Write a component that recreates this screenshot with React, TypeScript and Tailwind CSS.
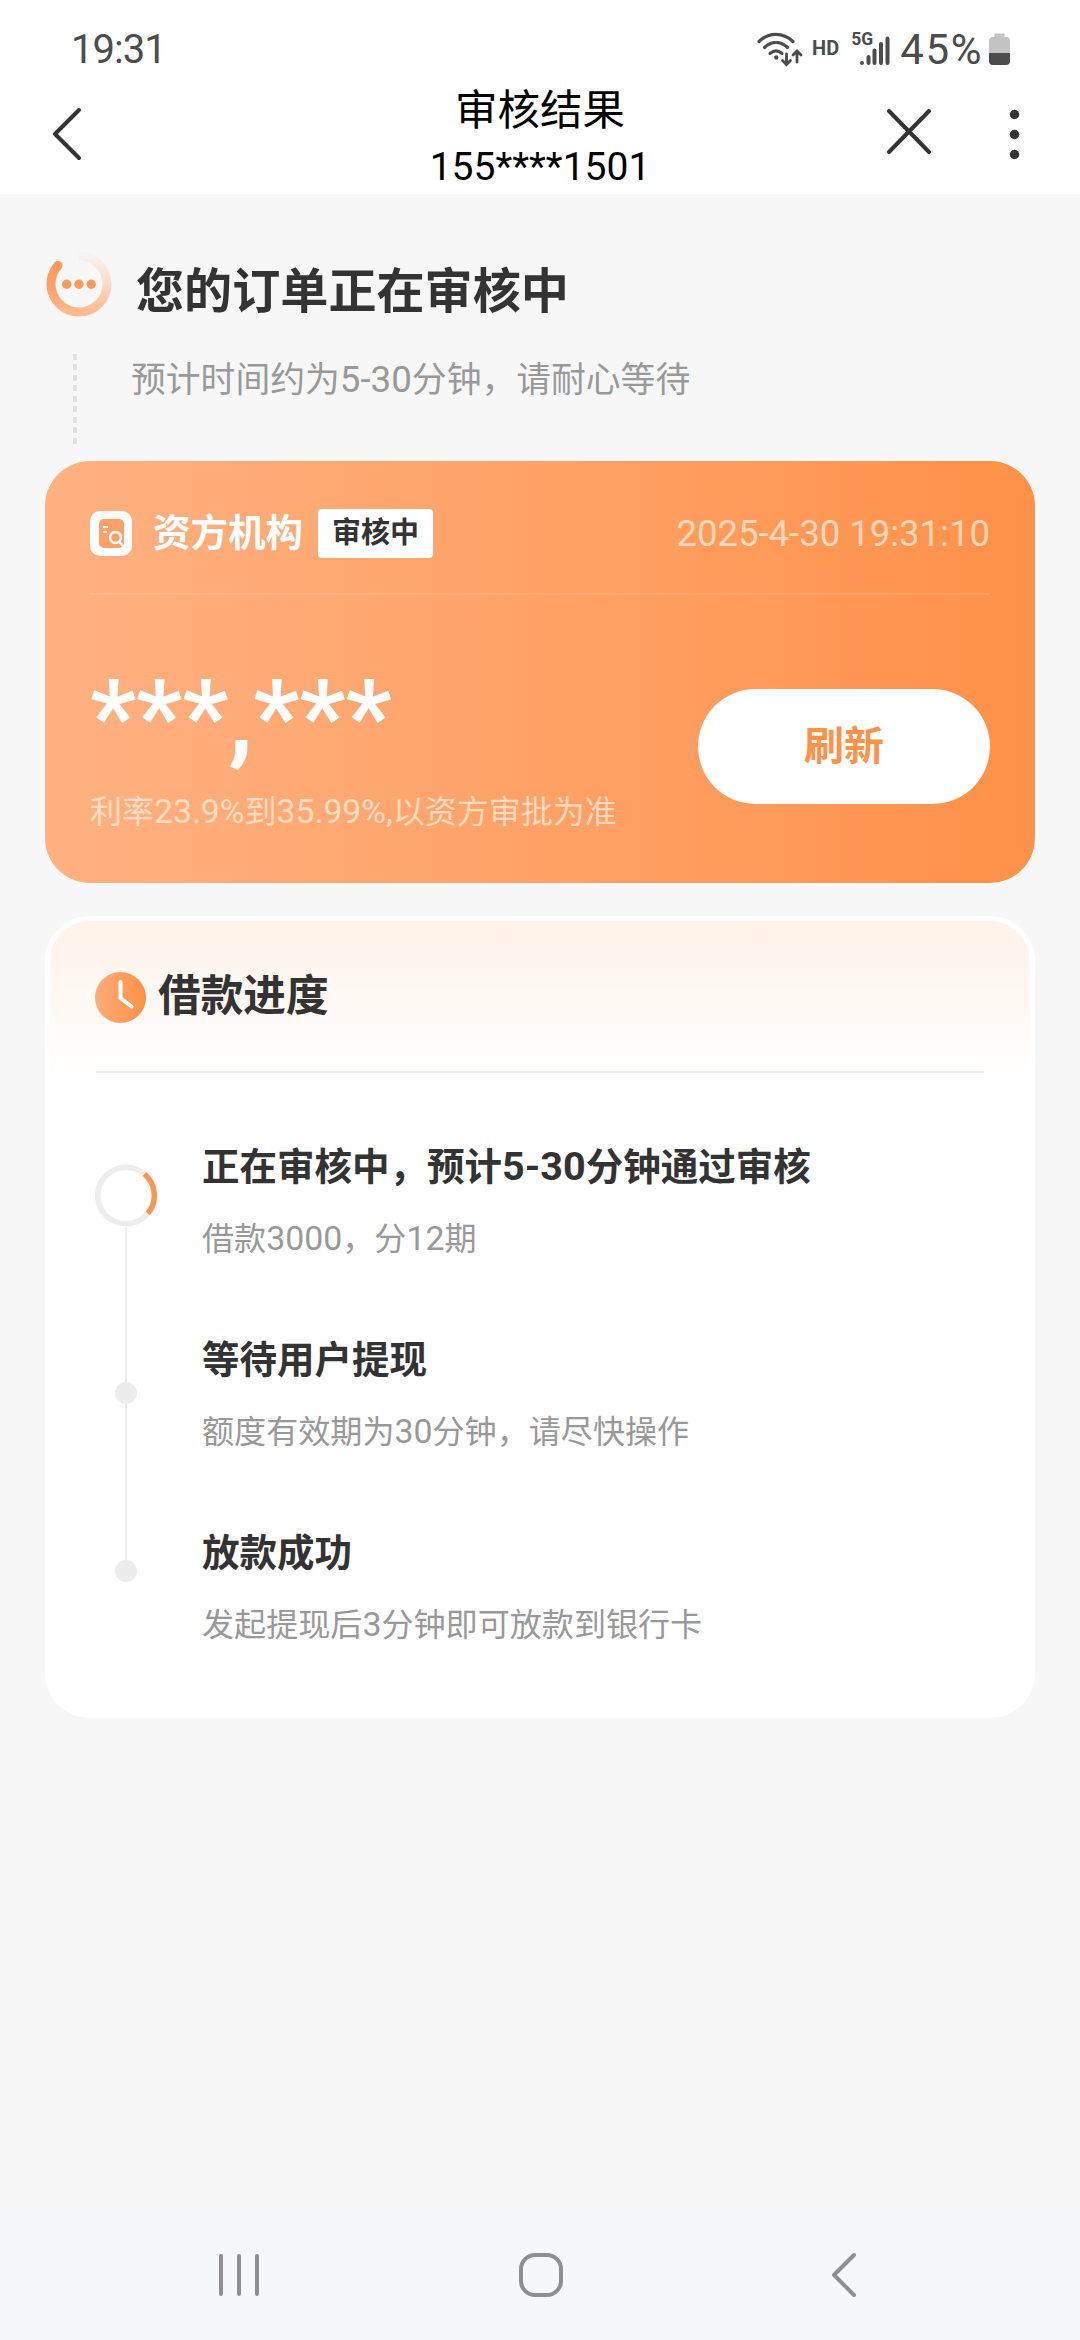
// ReviewResult - 审核结果
// Order under review: status header, lender card, loan progress

interface ProgressStep {
    id: number;
    title: string;
    desc: string;
}

const steps: ProgressStep[] = [
    { id: 1, title: '正在审核中，预计5-30分钟通过审核', desc: '借款3000，分12期' },
    { id: 2, title: '等待用户提现', desc: '额度有效期为30分钟，请尽快操作' },
    { id: 3, title: '放款成功', desc: '发起提现后3分钟即可放款到银行卡' },
];

// Latin runs are set slightly larger than the Chinese text around them
const MixedText = ({ text }: { text: string }) => (
    <>
        {text.split(/([\x21-\x7e]+)/).map((part, i) =>
            i % 2 === 1 ? (
                <span key={i} className="text-[1.055em] leading-none">{part}</span>
            ) : (
                part
            )
        )}
    </>
);

const StatusBar = () => (
    <div className="flex h-[82px] shrink-0 items-start pl-[71px] pr-[70px] pt-[26px] text-[#4c4c4c]">
        <span className="text-[40px] leading-[47px] tracking-[-1px]">19:31</span>
        <div className="ml-auto flex">
            {/* Wifi */}
            <svg className="mt-[3px] h-10 w-[48px]" viewBox="0 0 48 40" fill="none" stroke="#4c4c4c" strokeWidth="3.2" strokeLinecap="round">
                <path d="M3 12.500C13 3 27 3 37 12.500" />
                <path d="M8.500 18.500C15.500 11.800 24.500 11.800 31.500 18.500" />
                <path d="M14 24.500C18 21 22 21 26 24.500" />
                <circle cx="20.300" cy="28.500" r="2.200" fill="#4c4c4c" stroke="none" />
                <path d="M30.500 25V35M26.500 31.500L30.500 35.500L34.500 31.500M41 33V22.500M37 26L41 22L45 26" strokeWidth="2.800" />
            </svg>
            <span className="ml-[8px] mt-[11px] text-[20px] font-bold leading-[23px]">HD</span>
            {/* Signal */}
            <div className="relative ml-[12px] h-[47px] w-[40px]">
                <span className="absolute left-0 top-[3px] text-[17.500px] font-bold leading-[20px]">5G</span>
                <svg className="absolute left-0 top-[10px] h-[30px] w-[40px]" viewBox="0 0 40 30" fill="#4c4c4c">
                    <rect x="9" y="25" width="4" height="4" rx="2" />
                    <rect x="15.500" y="19" width="4" height="10" rx="2" />
                    <rect x="21.500" y="12.500" width="4" height="16.500" rx="2" />
                    <rect x="28" y="6" width="4" height="23" rx="2" />
                    <rect x="34.500" y="0.500" width="4" height="28.500" rx="2" />
                </svg>
            </div>
            <span className="ml-[9px] text-[42px] leading-[47px] tracking-[1.6px]">45%</span>
            {/* Battery */}
            <svg className="ml-[6px] mt-[7px] h-[33px] w-[21px]" viewBox="0 0 21 33">
                <path d="M5.500 0.500H15.500V4H17Q21 4 21 8V20H0V8Q0 4 4 4H5.500Z" fill="#c3c3c3" />
                <path d="M0 20H21V28Q21 32 17 32H4Q0 32 0 28Z" fill="#4c4c4c" />
            </svg>
        </div>
    </div>
);

const TitleBar = () => (
    <div className="relative h-[112px] shrink-0 text-center text-black">
        <div className="pt-[2px] text-[42.500px] leading-[54px]">审核结果</div>
        <div className="text-[39px] leading-[58px]">155****1501</div>
        <svg className="absolute left-[49px] top-[24px] h-[56px] w-[34px]" viewBox="0 0 34 56" fill="none" stroke="#333" strokeWidth="4" strokeLinecap="round" strokeLinejoin="round">
            <path d="M30 4L6 28L30 52" />
        </svg>
        <svg className="absolute left-[884px] top-[24px] h-[50px] w-[50px]" viewBox="0 0 50 50" fill="none" stroke="#333" strokeWidth="4" strokeLinecap="round">
            <path d="M5 5L45 46M45 5L5 46" />
        </svg>
        <svg className="absolute left-[1009px] top-[26px] h-[52px] w-[12px]" viewBox="0 0 12 52" fill="#333">
            <circle cx="5.500" cy="6.500" r="4.700" />
            <circle cx="5.500" cy="26.500" r="4.700" />
            <circle cx="5.500" cy="46.500" r="4.700" />
        </svg>
    </div>
);

const LoadingIcon = () => (
    <svg className="h-[70px] w-[70px]" viewBox="0 0 70 70" fill="none">
        <defs>
            <linearGradient id="ringLeft" x1="0" y1="0" x2="0" y2="1">
                <stop offset="0" stopColor="#fc9a5b" />
                <stop offset="0.500" stopColor="#fda269" />
                <stop offset="1" stopColor="#fdbb90" />
            </linearGradient>
            <linearGradient id="ringRight" x1="0" y1="1" x2="0" y2="0">
                <stop offset="0" stopColor="#fdbb90" />
                <stop offset="0.500" stopColor="#fbd9c4" />
                <stop offset="1" stopColor="#f8f3f0" />
            </linearGradient>
        </defs>
        <path d="M35 8A28 28 0 0 1 35 64" stroke="url(#ringRight)" strokeWidth="9" />
        <path d="M14 17.500A28 28 0 0 0 35.200 64" stroke="url(#ringLeft)" strokeWidth="9" />
        <circle cx="14" cy="17.500" r="4.500" fill="#fc9a5b" />
        <circle cx="22.700" cy="36.300" r="4.700" fill="#fc9a5b" />
        <circle cx="35" cy="36.300" r="4.700" fill="#fc9a5b" />
        <circle cx="47.300" cy="36.300" r="4.700" fill="#fc9a5b" />
    </svg>
);

const LenderCard = () => (
    <section className="mx-[45px] h-[422px] shrink-0 rounded-[45px] bg-linear-to-r from-[#ffb181] to-[#ff9148] px-[45px]">
        <div className="flex h-[134px] items-center border-b-2 border-white/10 pt-[13px]">
            <svg className="h-[45px] w-[42px]" viewBox="0 0 42 45" fill="none">
                <rect width="42" height="45" rx="10" fill="#fff" />
                <rect x="9" y="8" width="25" height="29" rx="5" fill="#ffa066" />
                <path d="M13 16H18M13 21H17" stroke="#fff" strokeWidth="2" />
                <circle cx="25.500" cy="26.500" r="5.500" stroke="#fff" strokeWidth="2.400" />
                <path d="M29.500 31L33 35" stroke="#fff" strokeWidth="2.400" />
            </svg>
            <h2 className="ml-[21px] text-[37.500px] font-bold text-white">资方机构</h2>
            <span className="ml-[15px] flex h-[49px] w-[115px] items-center justify-center rounded-[4px] bg-white pt-[1px] text-[29px] font-bold text-[#333]">
                审核中
            </span>
            <span className="ml-auto mt-[1px] text-[36.500px] text-[#fff4e6]/70">2025-4-30 19:31:10</span>
        </div>
        <div className="flex justify-between">
            <div>
                <div className="mt-[64px] h-[118px] text-[101.500px] font-bold leading-[118px] text-white">***,***</div>
                <div className="mt-[12px] text-[32px] leading-[46px] text-[#fff4e6]/70">
                    <MixedText text="利率23.9%到35.99%,以资方审批为准" />
                </div>
            </div>
            <button className="mt-[94px] h-[115px] w-[292px] rounded-full bg-white text-[40px] font-bold text-[#ff9148]">
                刷新
            </button>
        </div>
    </section>
);

const ProgressCard = () => (
    <section className="mx-[45px] mt-[33px] h-[802px] shrink-0 rounded-[45px] border-[5px] border-white bg-white bg-linear-to-b from-[#fff2e9] to-white to-[155px] px-[46px]">
        <div className="flex h-[152px] items-center border-b-2 border-[#ececec]">
            <svg className="-ml-px mt-[2px] h-[51px] w-[51px]" viewBox="0 0 51 51" fill="none">
                <defs>
                    <linearGradient id="clock" x1="0" y1="0" x2="1" y2="0">
                        <stop offset="0" stopColor="#ffac78" />
                        <stop offset="1" stopColor="#ff9148" />
                    </linearGradient>
                </defs>
                <circle cx="25.500" cy="25.500" r="25.500" fill="url(#clock)" />
                <path d="M25.500 10V26L36.500 34.500" stroke="#fff" strokeWidth="4" strokeLinecap="round" strokeLinejoin="round" />
            </svg>
            <h2 className="ml-[12px] mt-[1px] text-[42.700px] font-bold text-[#333]">借款进度</h2>
        </div>
        <div className="flex">
            {/* Timeline */}
            <div className="-ml-px mt-[91px] flex w-[62px] flex-col items-center">
                <svg className="h-[63px] w-[62px]" viewBox="0 0 62 63" fill="none" strokeWidth="5.500">
                    <circle cx="31" cy="31.500" r="28.300" stroke="#ededed" />
                    <path d="M49.500 10A28.300 28.300 0 0 1 52.800 49.500" stroke="#ff9552" />
                </svg>
                <div className="h-[155px] w-[2px] bg-[#ececec]" />
                <div className="h-[22px] w-[22px] rounded-full bg-[#ececec]" />
                <div className="h-[156px] w-[2px] bg-[#ececec]" />
                <div className="h-[22px] w-[22px] rounded-full bg-[#ececec]" />
            </div>
            <div className="ml-[45px] mt-[66px]">
                {steps.map((step) => (
                    <div key={step.id} className="h-[193px]">
                        <h3 className="h-[56px] text-[37.500px] font-bold leading-[56px] text-[#333]">
                            <MixedText text={step.title} />
                        </h3>
                        <p className="mt-[21px] text-[32.100px] leading-[46px] text-[#999]">
                            <MixedText text={step.desc} />
                        </p>
                    </div>
                ))}
            </div>
        </div>
    </section>
);

const NavBar = () => (
    <div className="mt-auto flex h-[130px] shrink-0 items-center bg-[#f6f7f9] pl-[217px]">
        <svg className="h-[50px] w-[44px]" viewBox="0 0 44 50" stroke="#8f8f91" strokeWidth="4" strokeLinecap="round">
            <path d="M4 6V44M22 6V44M40 6V44" />
        </svg>
        <svg className="ml-[255px] h-[50px] w-[50px]" viewBox="0 0 50 50" fill="none" stroke="#8f8f91" strokeWidth="4">
            <rect x="5" y="5" width="40" height="40" rx="14" />
        </svg>
        <svg className="ml-[262px] h-[50px] w-[30px]" viewBox="0 0 30 50" fill="none" stroke="#8f8f91" strokeWidth="4" strokeLinecap="round" strokeLinejoin="round">
            <path d="M26 5L6 25L26 45" />
        </svg>
    </div>
);

export default function App() {
    return (
        <div className="flex h-[2340px] w-[1080px] flex-col overflow-hidden whitespace-nowrap bg-[#f7f7f7] font-['Roboto','Noto_Sans_CJK_SC',sans-serif]">
            <header className="flex flex-col bg-white">
                <StatusBar />
                <TitleBar />
            </header>

            {/* Review status */}
            <div className="h-[267px] shrink-0 pl-[44px] pt-[54px]">
                <div className="flex h-[86px] items-start">
                    <LoadingIcon />
                    <h1 className="ml-[22px] mt-[9px] text-[48.100px] font-bold leading-[70px] text-[#333]">您的订单正在审核中</h1>
                </div>
                <div className="flex pl-[29px]">
                    <div className="mt-[20px] h-[91px] w-[4px] bg-[repeating-linear-gradient(180deg,#e0e0e0_0_6px,transparent_6px_10.5px)]" />
                    <p className="ml-[54px] mt-[21px] text-[34.800px] leading-[50px] text-[#999]">
                        <MixedText text="预计时间约为5-30分钟，请耐心等待" />
                    </p>
                </div>
            </div>

            <LenderCard />
            <ProgressCard />
            <NavBar />
        </div>
    );
}
